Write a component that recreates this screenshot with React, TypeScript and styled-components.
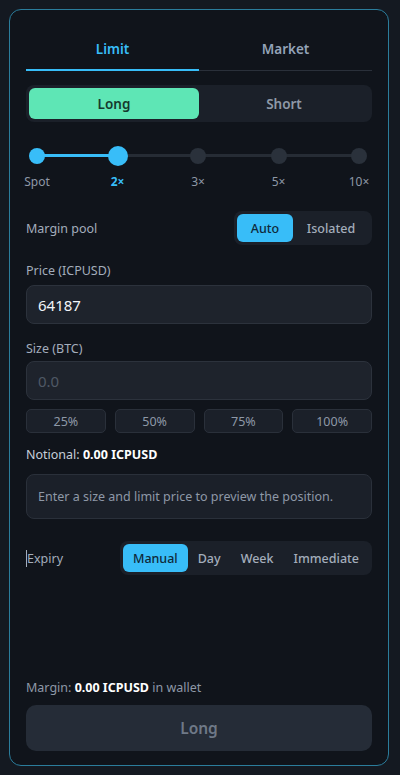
import React from "react";
import styled, { createGlobalStyle } from "styled-components";

const Global = createGlobalStyle`
  html, body { margin: 0; padding: 0; background: #141921; }
  body { font-family: "Noto Sans", "Open Sans", sans-serif; -webkit-font-smoothing: antialiased; }
  * { box-sizing: border-box; }
`;

const Page = styled.div`
  width: 400px;
  height: 775px;
  padding: 9px 11px 9px 9px;
  background: #141921;
`;

const Card = styled.div`
  height: 757px;
  border: 1px solid #2b7d9c;
  border-radius: 12px;
  background: #10141b;
  padding: 16px 16px 14px 16px;
  display: flex;
  flex-direction: column;
`;

const Tabs = styled.div`
  display: grid;
  grid-template-columns: 1fr 1fr;
  border-bottom: 1px solid #2a303a;
`;

const Tab = styled.div<{ $active?: boolean }>`
  height: 45px;
  padding-top: 3px;
  display: flex;
  align-items: center;
  justify-content: center;
  font-size: 13.5px;
  font-weight: 600;
  color: ${(p) => (p.$active ? "#38bdf8" : "#94a3b8")};
  border-bottom: 2px solid ${(p) => (p.$active ? "#38bdf8" : "transparent")};
  margin-bottom: -1px;
`;

const Segment = styled.div<{ $mt: number }>`
  margin-top: ${(p) => p.$mt}px;
  display: flex;
  background: #1b2029;
  border-radius: 8px;
  padding: 3px;
`;

const SideButton = styled.div<{ $active?: boolean }>`
  flex: 1;
  height: 31px;
  border-radius: 6px;
  display: flex;
  align-items: center;
  justify-content: center;
  font-size: 13.5px;
  font-weight: 600;
  background: ${(p) => (p.$active ? "#5ee6b5" : "transparent")};
  color: ${(p) => (p.$active ? "#153a2e" : "#8e98a7")};
`;

const Slider = styled.div`
  position: relative;
  margin-top: 23px;
  display: flex;
  justify-content: space-between;
  padding: 0 2px 0 0;
`;

const Track = styled.div`
  position: absolute;
  left: 11px;
  right: 13px;
  top: 9px;
  height: 3px;
  background: #262c35;
  border-radius: 2px;
`;

const TrackFill = styled.div`
  position: absolute;
  left: 0;
  top: 0;
  height: 3px;
  background: #38bdf8;
  border-radius: 2px;
`;

const Stop = styled.div`
  position: relative;
  width: 22px;
  display: flex;
  flex-direction: column;
  align-items: center;
`;

const DotBox = styled.div`
  height: 21px;
  display: flex;
  align-items: center;
  justify-content: center;
`;

const Dot = styled.div<{ $on?: boolean; $big?: boolean }>`
  width: ${(p) => (p.$big ? 20 : 16)}px;
  height: ${(p) => (p.$big ? 20 : 16)}px;
  border-radius: 50%;
  background: ${(p) => (p.$on ? "#38bdf8" : "#2a313b")};
`;

const StopLabel = styled.div<{ $on?: boolean }>`
  margin-top: 8px;
  font-size: 12px;
  line-height: 16px;
  white-space: nowrap;
  font-weight: ${(p) => (p.$on ? 700 : 400)};
  color: ${(p) => (p.$on ? "#38bdf8" : "#8e98a7")};
`;

const Row = styled.div<{ $mt: number }>`
  margin-top: ${(p) => p.$mt}px;
  display: flex;
  align-items: center;
  justify-content: space-between;
`;

const RowLabel = styled.div<{ $caret?: boolean }>`
  font-size: 12.5px;
  color: #a3adbb;
  ${(p) => (p.$caret ? "border-left: 1px solid #a3adbb;" : "")}
`;

const Pill = styled.div`
  display: flex;
  background: #1b2029;
  border-radius: 8px;
  padding: 3px;
`;

const PillButton = styled.div<{ $active?: boolean; $w?: number }>`
  height: 28px;
  padding: 0 10px;
  ${(p) => (p.$w ? `width: ${p.$w}px;` : "")}
  border-radius: 6px;
  display: flex;
  align-items: center;
  justify-content: center;
  font-size: 12.5px;
  font-weight: 500;
  background: ${(p) => (p.$active ? "#38bdf8" : "transparent")};
  color: ${(p) => (p.$active ? "#0f2a3a" : "#a3adbb")};
`;

const FieldLabel = styled.div<{ $mt: number }>`
  margin-top: ${(p) => p.$mt}px;
  font-size: 12.5px;
  color: #a3adbb;
  line-height: 16px;
`;

const Input = styled.div<{ $placeholder?: boolean; $mt: number }>`
  margin-top: ${(p) => p.$mt}px;
  height: 39px;
  border: 1px solid #2c323c;
  background: #1e232c;
  border-radius: 8px;
  padding: 0 11px;
  display: flex;
  align-items: center;
  font-size: 15px;
  color: ${(p) => (p.$placeholder ? "#4f5865" : "#f1f5f9")};
`;

const Percents = styled.div`
  margin-top: 9px;
  display: grid;
  grid-template-columns: repeat(4, 1fr);
  gap: 9px;
`;

const PercentButton = styled.div`
  height: 24px;
  border: 1px solid #2a303a;
  background: #1b2029;
  border-radius: 5px;
  display: flex;
  align-items: center;
  justify-content: center;
  font-size: 12.5px;
  color: #8e98a7;
`;

const InfoLine = styled.div<{ $mt: number; $light?: boolean }>`
  margin-top: ${(p) => p.$mt}px;
  font-size: 12.5px;
  line-height: 18px;
  color: ${(p) => (p.$light ? "#c5ced9" : "#8e98a7")};
  b { color: #ffffff; font-weight: 700; }
`;

const Preview = styled.div`
  margin-top: 10px;
  height: 45px;
  border: 1px solid #2a303a;
  background: #1b2029;
  border-radius: 8px;
  padding: 0 11px;
  display: flex;
  align-items: center;
  font-size: 12.5px;
  color: #8e98a7;
`;

const Spacer = styled.div`
  flex: 1;
`;

const Submit = styled.div`
  margin-top: 8px;
  height: 46px;
  border-radius: 10px;
  background: #252c37;
  display: flex;
  align-items: center;
  justify-content: center;
  font-size: 15.5px;
  font-weight: 600;
  color: #6f7987;
`;

const stops = [
  { label: "Spot", on: true },
  { label: "2×", on: true, big: true, active: true },
  { label: "3×" },
  { label: "5×" },
  { label: "10×" },
];

export default function App() {
  return (
    <Page>
      <Global />
      <Card>
        <Tabs>
          <Tab $active>Limit</Tab>
          <Tab>Market</Tab>
        </Tabs>
        <Segment $mt={14}>
          <SideButton $active>Long</SideButton>
          <SideButton>Short</SideButton>
        </Segment>
        <Slider>
          <Track>
            <TrackFill style={{ width: "25%" }} />
          </Track>
          {stops.map((s) => (
            <Stop key={s.label}>
              <DotBox>
                <Dot $on={s.on} $big={s.big} />
              </DotBox>
              <StopLabel $on={s.active}>{s.label}</StopLabel>
            </Stop>
          ))}
        </Slider>
        <Row $mt={21}>
          <RowLabel>Margin pool</RowLabel>
          <Pill>
            <PillButton $active $w={56}>Auto</PillButton>
            <PillButton $w={76}>Isolated</PillButton>
          </Pill>
        </Row>
        <FieldLabel $mt={18}>Price (ICPUSD)</FieldLabel>
        <Input $mt={6}>64187</Input>
        <FieldLabel $mt={17}>Size (BTC)</FieldLabel>
        <Input $mt={4} $placeholder>0.0</Input>
        <Percents>
          <PercentButton>25%</PercentButton>
          <PercentButton>50%</PercentButton>
          <PercentButton>75%</PercentButton>
          <PercentButton>100%</PercentButton>
        </Percents>
        <InfoLine $mt={13} $light>
          Notional: <b>0.00 ICPUSD</b>
        </InfoLine>
        <Preview>Enter a size and limit price to preview the position.</Preview>
        <Row $mt={22}>
          <RowLabel $caret>Expiry</RowLabel>
          <Pill>
            <PillButton $active>Manual</PillButton>
            <PillButton>Day</PillButton>
            <PillButton>Week</PillButton>
            <PillButton>Immediate</PillButton>
          </Pill>
        </Row>
        <Spacer />
        <InfoLine $mt={0}>
          Margin: <b>0.00 ICPUSD</b> in wallet
        </InfoLine>
        <Submit>Long</Submit>
      </Card>
    </Page>
  );
}
